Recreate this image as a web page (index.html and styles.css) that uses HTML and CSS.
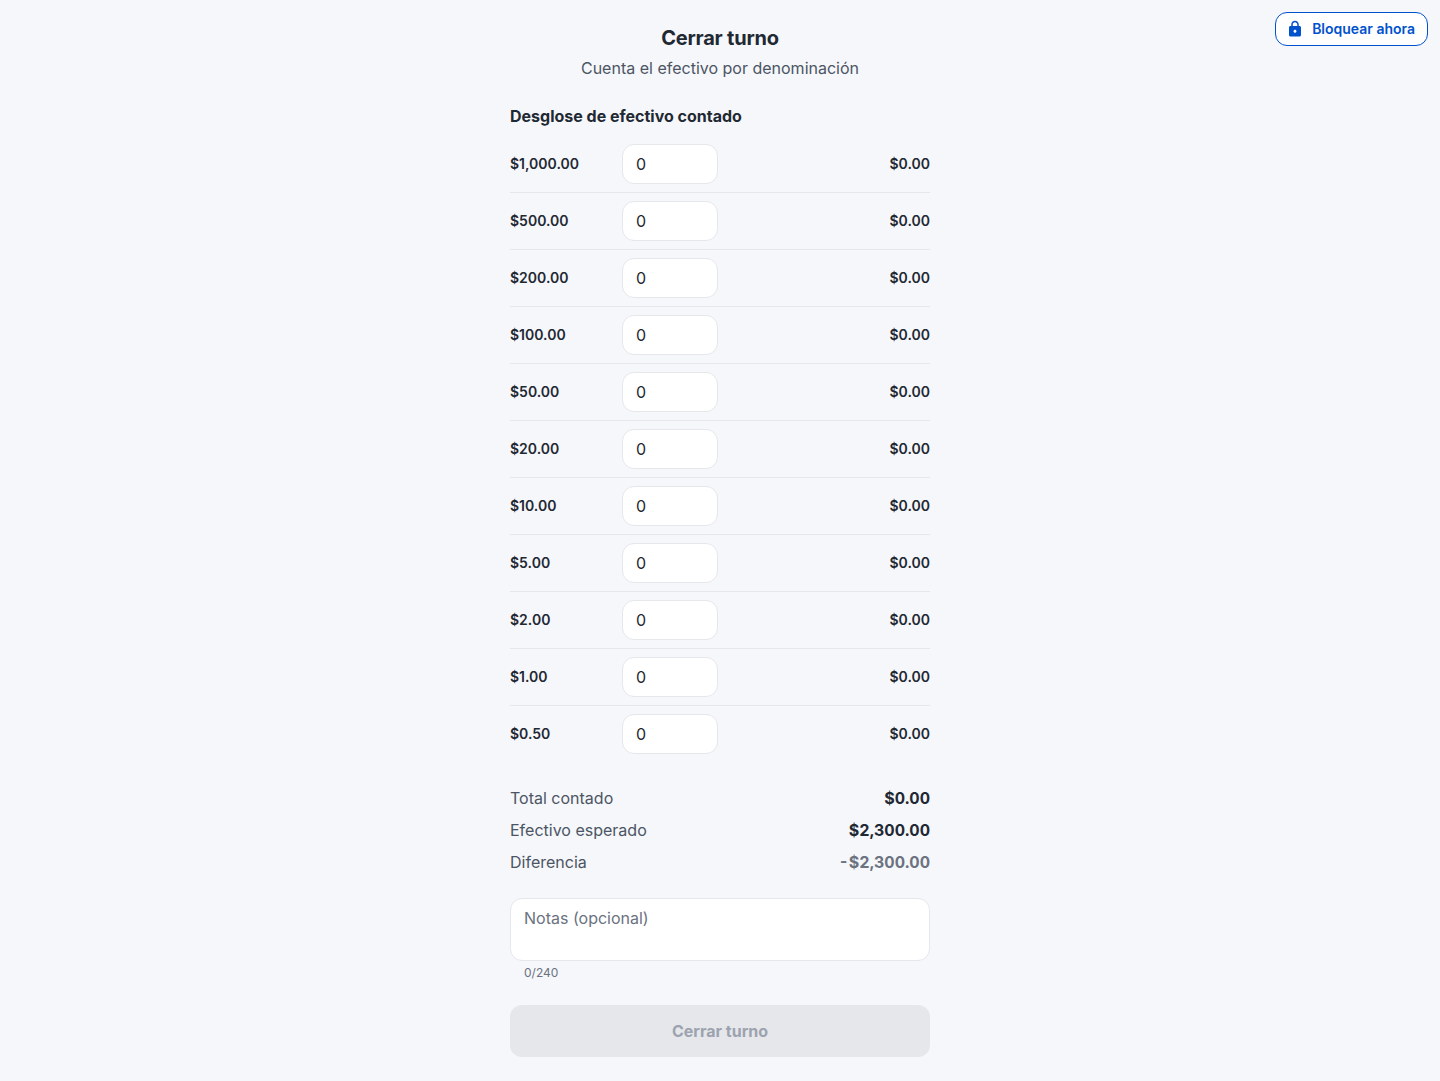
FILE: index.html
```html
<!DOCTYPE html>
<html lang="es">
<head>
    <meta charset="UTF-8">
    <meta name="viewport" content="width=device-width, initial-scale=1.0">
    <title>Cerrar turno</title>
    <link rel="stylesheet" href="styles.css">
</head>
<body>
    <button class="lock-button" type="button">
        <svg viewBox="0 0 24 24" aria-hidden="true">
            <path d="M18 8h-1V6c0-2.760-2.240-5-5-5S7 3.240 7 6v2H6c-1.100 0-2 .9-2 2v10c0 1.100.9 2 2 2h12c1.100 0 2-.9 2-2V10c0-1.100-.9-2-2-2zm-6 9c-1.100 0-2-.9-2-2s.9-2 2-2 2 .9 2 2-.9 2-2 2zM9 8V6c0-1.660 1.340-3 3-3s3 1.340 3 3v2H9z"/>
        </svg>
        <span>Bloquear ahora</span>
    </button>

    <main class="container">
        <h1>Cerrar turno</h1>
        <p class="subtitle">Cuenta el efectivo por denominación</p>

        <h2>Desglose de efectivo contado</h2>
        <div class="rows" id="rows"></div>

        <div class="totals">
            <div class="total"><span>Total contado</span><strong id="counted">$0.00</strong></div>
            <div class="total"><span>Efectivo esperado</span><strong>$2,300.00</strong></div>
            <div class="total"><span>Diferencia</span><strong class="muted" id="difference">-$2,300.00</strong></div>
        </div>

        <textarea class="notes" id="notes" maxlength="240" placeholder="Notas (opcional)"></textarea>
        <div class="counter" id="counter">0/240</div>

        <button class="submit" type="submit" disabled>Cerrar turno</button>
    </main>

    <script src="script.js"></script>
</body>
</html>
```
FILE: styles.css
```css
* {
    box-sizing: border-box;
}

body {
    margin: 0;
    background-color: #f6f7fb;
    color: #1f2933;
    font-family: Inter, sans-serif;
    font-size: 16px;
    line-height: 24px;
}

button,
input,
textarea {
    font-family: inherit;
}

.lock-button {
    position: absolute;
    top: 12px;
    right: 12px;
    display: flex;
    align-items: center;
    gap: 8px;
    height: 34px;
    padding: 0 12px 0 10px;
    border: 1px solid #0052cc;
    border-radius: 12px;
    background-color: white;
    color: #0052cc;
    font-size: 14px;
    font-weight: 600;
    line-height: 20px;
    white-space: nowrap;
    cursor: pointer;
}

.lock-button svg {
    width: 18px;
    height: 18px;
    fill: currentColor;
}

.container {
    width: 420px;
    margin: 0 auto;
    padding-top: 24px;
}

h1 {
    margin: 0 0 4px;
    font-size: 20px;
    font-weight: 700;
    letter-spacing: -0.2px;
    line-height: 28px;
    text-align: center;
}

.subtitle {
    margin: 0 0 24px;
    color: #4b5563;
    text-align: center;
}

h2 {
    margin: 0 0 8px;
    font-size: 16px;
    font-weight: 700;
    line-height: 24px;
}

.row {
    display: flex;
    align-items: center;
    padding: 8px 0;
    border-bottom: 1px solid #e5e7eb;
    font-size: 14px;
    font-weight: 600;
    line-height: 20px;
}

.row:last-child {
    border-bottom: none;
}

.row label {
    width: 112px;
}

.row input {
    width: 96px;
    height: 40px;
    padding: 0 13px;
    border: 1px solid #e5e7eb;
    border-radius: 12px;
    background-color: white;
    color: #1f2933;
    font-size: 16px;
}

.row .amount {
    margin-left: auto;
}

.totals {
    display: flex;
    flex-direction: column;
    gap: 8px;
    margin-top: 24px;
}

.total {
    display: flex;
    justify-content: space-between;
    color: #4b5563;
}

.total strong {
    color: #1f2933;
    font-weight: 700;
    font-variant-numeric: tabular-nums;
}

.total .muted {
    color: #6b7280;
}

.notes {
    display: block;
    width: 100%;
    height: 63px;
    margin-top: 24px;
    padding: 7px 13px;
    border: 1px solid #e5e7eb;
    border-radius: 12px;
    background-color: white;
    color: #1f2933;
    font-size: 16px;
    line-height: 24px;
    resize: none;
}

.notes::placeholder {
    color: #6b7280;
}

.counter {
    margin-top: 4px;
    padding-left: 14px;
    color: #6b7280;
    font-size: 12px;
    line-height: 16px;
}

.submit {
    display: block;
    width: 100%;
    height: 52px;
    margin: 24px 0;
    border: none;
    border-radius: 12px;
    background-color: #e5e7eb;
    color: #9ca3af;
    font-size: 16px;
    font-weight: 700;
    line-height: 24px;
}
```
FILE: script.js
```js
const denominations = [1000, 500, 200, 100, 50, 20, 10, 5, 2, 1, 0.5];
const expected = 2300;
const rows = document.getElementById("rows");

function money(value) {
    const sign = value < 0 ? "-" : "";
    return sign + "$" + Math.abs(value).toLocaleString("en-US", { minimumFractionDigits: 2, maximumFractionDigits: 2 });
}

function updateTotals() {
    let counted = 0;
    rows.querySelectorAll(".row").forEach((row, i) => {
        const subtotal = denominations[i] * (parseInt(row.querySelector("input").value, 10) || 0);
        row.querySelector(".amount").innerText = money(subtotal);
        counted += subtotal;
    });
    document.getElementById("counted").innerText = money(counted);
    document.getElementById("difference").innerText = money(counted - expected);
}

denominations.forEach((value, i) => {
    const row = document.createElement("div");
    row.className = "row";
    row.innerHTML = `
        <label for="qty${i}">${money(value)}</label>
        <input id="qty${i}" type="text" inputmode="numeric" value="0">
        <span class="amount">$0.00</span>`;
    row.querySelector("input").addEventListener("input", updateTotals);
    rows.appendChild(row);
});

document.getElementById("notes").addEventListener("input", (e) => {
    document.getElementById("counter").innerText = `${e.target.value.length}/240`;
});
```
